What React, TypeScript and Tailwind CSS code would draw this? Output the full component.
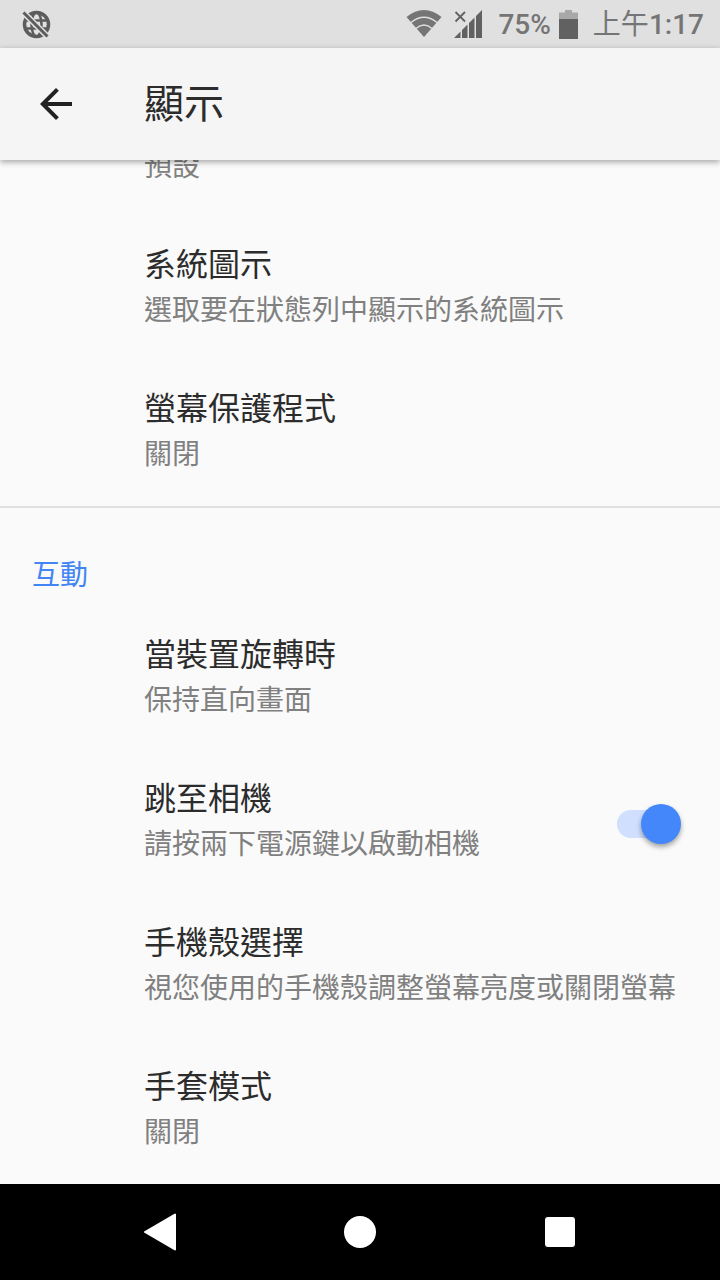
const cjk = { fontFamily: '"Roboto", "Noto Sans CJK TC", sans-serif' };

function Row({ title, sub, toggle }: { title: string; sub: string; toggle?: boolean }) {
  return (
    <div className="flex h-[144px] items-center justify-between pl-[144px] pr-[39px]">
      <div className="flex flex-col">
        <div className="h-[46px] whitespace-nowrap text-[32px] leading-[44px] text-[#2c2c2c]">{title}</div>
        <div className="h-[44px] whitespace-nowrap text-[28px] leading-[44px] text-[#808080]">{sub}</div>
      </div>
      {toggle && (
        <div className="relative mt-[4px] h-10 w-16 shrink-0">
          <div className="absolute left-0 top-[6px] h-7 w-12 rounded-full bg-[#cfdffd]" />
          <div className="absolute right-0 top-0 h-10 w-10 rounded-full bg-[#4487fb] shadow-[0_3px_5px_rgba(0,0,0,0.35)]" />
        </div>
      )}
    </div>
  );
}

export default function App() {
  return (
    <div className="flex h-[1280px] w-[720px] flex-col overflow-hidden bg-[#fafafa]" style={cjk}>
      <div className="flex h-12 shrink-0 items-center justify-between bg-[#e0e0e0] pl-[22px] pr-[16px] text-[#757575]">
        <svg width="29" height="29" viewBox="0 0 29 29" fill="none">
          <circle cx="14.5" cy="14.5" r="12" stroke="#5c5c5c" strokeWidth="3.5" />
          <ellipse cx="14.5" cy="14.5" rx="5" ry="12" stroke="#5c5c5c" strokeWidth="2.5" />
          <path d="M3 10.5H26M3 18.5H26" stroke="#5c5c5c" strokeWidth="2.5" />
          <path d="M2 3L26 27" stroke="#e0e0e0" strokeWidth="6" />
          <path d="M1.5 2.5L25.5 26.5" stroke="#5c5c5c" strokeWidth="3" />
        </svg>
        <div className="flex items-center">
          <svg width="36" height="30" viewBox="0 0 36 30" fill="none" className="mr-[12px]">
            <path d="M0.5 8Q18 -6 35.5 8L18 28Z" fill="#757575" />
            <path d="M5 13.5Q18 3 31 13.5M10 19.5Q18 12.5 26 19.5" stroke="#e0e0e0" strokeWidth="1.5" />
          </svg>
          <svg width="29" height="30" viewBox="0 0 29 30" fill="#616161" className="mr-[15px]">
            <path d="M1.5 3L11 12.5M11 3L1.5 12.5" stroke="#616161" strokeWidth="1.8" />
            <path d="M0 29L6.5 22.5V29ZM8 21L13.5 15.5V29H8ZM15 14L20.5 8.5V29H15ZM22 7L28 1V29H22Z" />
          </svg>
          <span className="mr-[8px] pt-[2px] text-[28px] font-medium leading-none">75%</span>
          <svg width="19" height="29" viewBox="0 0 19 29" className="mr-[15px]">
            <path d="M6 0H13V2.5H19V29H0V2.5H6Z" fill="#a8a8a8" />
            <rect x="0" y="9" width="19" height="20" fill="#616161" />
          </svg>
          <span className="pt-[2px] text-[28px] font-medium leading-none"><span className="font-normal">上午</span>1:17</span>
        </div>
      </div>
      <div className="relative z-10 flex h-28 shrink-0 items-center bg-[#f5f5f5] pl-8 shadow-[0_2px_6px_rgba(0,0,0,0.35)]">
        <svg width="48" height="48" viewBox="0 0 24 24" fill="#212121">
          <path d="M20 11H7.83l5.59-5.59L12 4l-8 8 8 8 1.41-1.41L7.83 13H20v-2z" />
        </svg>
        <div className="ml-[64px] pt-[2px] text-[40px] leading-none text-[#2c2c2c]">顯示</div>
      </div>
      <div className="min-h-0 flex-1 overflow-hidden">
        <div className="-mt-[13px] h-[69px] pl-[144px] text-[28px] leading-10 text-[#808080]">預設</div>
        <Row title="系統圖示" sub="選取要在狀態列中顯示的系統圖示" />
        <Row title="螢幕保護程式" sub="關閉" />
        <div className="mt-[2px] h-[2px] bg-[#e0e0e0]" />
        <div className="h-[98px] pl-[32px] pt-[48px] text-[28px] leading-10 text-[#4285f4]">互動</div>
        <Row title="當裝置旋轉時" sub="保持直向畫面" />
        <Row title="跳至相機" sub="請按兩下電源鍵以啟動相機" toggle />
        <Row title="手機殼選擇" sub="視您使用的手機殼調整螢幕亮度或關閉螢幕" />
        <Row title="手套模式" sub="關閉" />
      </div>
      <div className="flex h-24 shrink-0 items-center bg-black pl-[144px]">
        <svg width="32" height="38" viewBox="0 0 32 38" fill="white" stroke="white" strokeWidth="2" strokeLinejoin="round">
          <path d="M31 1.5V36.5L1 19Z" />
        </svg>
        <div className="ml-[168px] h-8 w-8 rounded-full bg-white" />
        <div className="ml-[169px] h-[30px] w-[30px] rounded-[3px] bg-white" />
      </div>
    </div>
  );
}
